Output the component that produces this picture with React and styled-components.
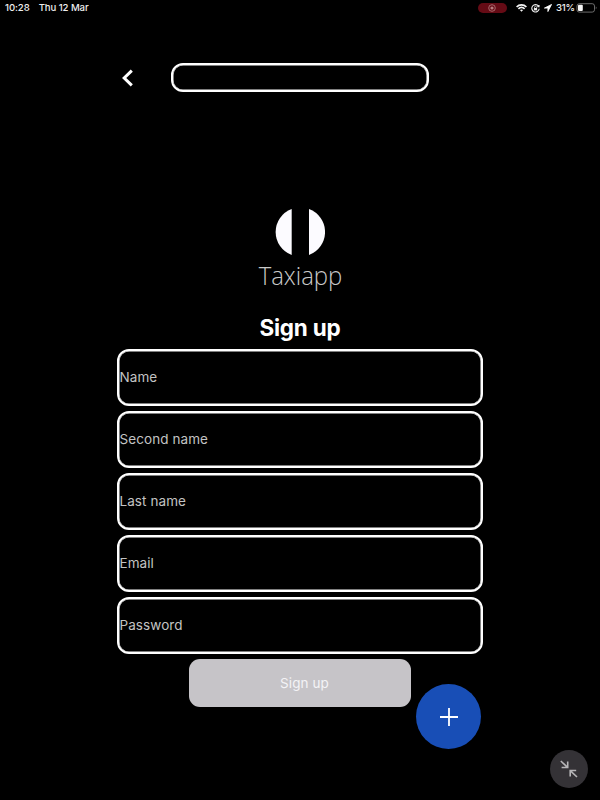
import React from "react";
import styled, { createGlobalStyle } from "styled-components";

const GlobalStyle = createGlobalStyle`
  *, *::before, *::after { box-sizing: border-box; }
  body { margin: 0; background: #000; font-family: Inter, "Liberation Sans", sans-serif; -webkit-font-smoothing: antialiased; }
  button, input { font-family: inherit; }
`;

const Screen = styled.div`
  position: relative;
  display: flex;
  flex-direction: column;
  width: 600px;
  height: 800px;
  background: #000;
  color: #fff;
  overflow: hidden;
`;

const StatusBar = styled.header`
  display: flex;
  align-items: center;
  justify-content: space-between;
  height: 16px;
  padding: 0 3px 0 5px;
  font-size: 9.6px;
  font-weight: 500;
  line-height: 16px;
  letter-spacing: -0.08px;
  color: #eee;
`;

const StatusGroup = styled.div`
  display: flex;
  align-items: center;
  gap: ${(p) => p.$gap}px;
  svg { display: block; }
`;

const RecordingPill = styled.span`
  display: flex;
  align-items: center;
  justify-content: center;
  width: 29px;
  height: 10px;
  margin-right: 5px;
  border-radius: 5px;
  background: #650b15;
`;

const BatteryLevel = styled.span`
  display: flex;
  align-items: center;
  gap: 1px;
  letter-spacing: -0.15px;
`;

const NavBar = styled.nav`
  display: flex;
  align-items: center;
  height: 29px;
  margin-top: 47px;
  padding-left: 117px;
`;

const BackButton = styled.button`
  display: flex;
  width: 54px;
  height: 29px;
  padding: 5px 0 0 4px;
  border: 0;
  background: none;
`;

const OutlinedInput = styled.input`
  border: 2px solid #fff;
  border-radius: 12px;
  background: #000;
  box-shadow: inset 0 0 0 0.5px #fff;
  color: #fff;
  outline: none;
`;

const NavField = styled(OutlinedInput)`
  width: 258px;
  height: 29px;
  padding: 0 8px;
`;

const Brand = styled.div`
  display: flex;
  flex-direction: column;
  align-items: center;
  margin-top: 115px;
  svg { display: block; }
`;

const BrandName = styled.span`
  height: 36px;
  font-family: "Open Sans", "Noto Sans", sans-serif;
  font-size: 26px;
  font-weight: 300;
  line-height: 36px;
  color: #c9c9c9;
  transform: scaleX(0.92);
`;

const Title = styled.h1`
  height: 30px;
  margin: 20px 0 0;
  font-size: 22.5px;
  font-weight: 700;
  line-height: 30px;
  letter-spacing: -0.2px;
  text-align: center;
`;

const Form = styled.form`
  display: flex;
  flex-direction: column;
  align-items: center;
  gap: 5px;
  margin-top: 6px;
`;

const Field = styled(OutlinedInput)`
  width: 366px;
  height: 57px;
  padding: 0 0 1px 0.5px;
  font-size: 13.5px;
  letter-spacing: 0.08px;
  &::placeholder { color: #c3c3c3; opacity: 1; }
`;

const SubmitButton = styled.button`
  width: 222px;
  height: 48px;
  padding: 0 0 0 9px;
  border: 0;
  border-radius: 11px;
  background: #c6c4c8;
  color: #f4f3f6;
  font-size: 13.5px;
  letter-spacing: 0.1px;
`;

const RoundButton = styled.button`
  position: absolute;
  left: ${(p) => p.$x}px;
  top: ${(p) => p.$y}px;
  display: flex;
  align-items: center;
  justify-content: center;
  width: ${(p) => p.$size}px;
  height: ${(p) => p.$size}px;
  padding: 0;
  border: 0;
  border-radius: 50%;
  background: ${(p) => p.$color};
`;

const fields = [
  { label: "Name", type: "text" },
  { label: "Second name", type: "text" },
  { label: "Last name", type: "text" },
  { label: "Email", type: "email" },
  { label: "Password", type: "password" },
];

const RecordIcon = () => (
  <svg width="8" height="8" viewBox="0 0 8 8" fill="none">
    <circle cx="4" cy="4" r="3.3" stroke="#b87d80" strokeWidth="0.8" />
    <circle cx="4" cy="4" r="1.6" fill="#b87d80" />
  </svg>
);

const WifiIcon = () => (
  <svg width="11" height="8" viewBox="0 0 11 8" fill="none" stroke="#f5f5f5" strokeWidth="1.7">
    <path d="M.6 3C3.3.2 7.7.2 10.4 3M2.4 4.9c1.8-1.7 4.4-1.7 6.2 0" />
    <path d="M5.5 7.8 3.9 6.1c1-.8 2.2-.8 3.2 0Z" fill="#f5f5f5" stroke="none" />
  </svg>
);

const RotationLockIcon = () => (
  <svg width="9" height="9" viewBox="0 0 9 9" fill="none" stroke="#eee">
    <path d="M7.5 2.1A3.7 3.7 0 1 0 8.2 4.8M8 1v1.8H6.2" strokeWidth="1.1" />
    <rect x="2.9" y="4" width="3.2" height="2.4" fill="#eee" stroke="none" />
    <path d="M3.5 4V3.3a1 1 0 0 1 2 0V4" strokeWidth="0.7" />
  </svg>
);

const LocationIcon = () => (
  <svg width="8" height="8" viewBox="0 0 8 8">
    <path d="M7.6.4.4 4.1h3.5v3.5Z" fill="#fff" stroke="#fff" strokeWidth="0.8" strokeLinejoin="round" />
  </svg>
);

const BatteryIcon = () => (
  <svg width="21" height="10" viewBox="0 0 21 10" fill="none">
    <rect x="1" y="0.7" width="17.5" height="8.4" rx="2.3" stroke="#858585" strokeWidth="0.8" />
    <rect x="2" y="1.7" width="4.8" height="6.4" rx="1" fill="#f5f5f5" />
    <path d="M19.8 3.6c.9.4.9 2.2 0 2.6Z" fill="#858585" />
  </svg>
);

const ChevronIcon = () => (
  <svg width="14" height="20" viewBox="0 0 14 20" fill="none" stroke="#fff" strokeWidth="3">
    <path d="M10.8 2.7 3.2 10l7.6 7.3" />
  </svg>
);

const LogoMark = () => (
  <svg width="50" height="50" viewBox="0 0 50 50" fill="#fcfbff">
    <path d="M16.7 2v46A24.5 24.5 0 0 1 16.7 2Z" />
    <path d="M34 2v46A24.5 24.5 0 0 0 34 2Z" />
  </svg>
);

const PlusIcon = () => (
  <svg width="18" height="18" viewBox="0 0 18 18" stroke="#fff" strokeWidth="1.8">
    <path d="M9 0v18M0 9h18" />
  </svg>
);

const ShrinkIcon = () => (
  <svg width="18" height="18" viewBox="0 0 18 18" fill="none" stroke="#b6b5b7" strokeWidth="1.6">
    <path d="m.8 1 6.5 6.1M7.7 1.6v5.9H1.6M17 17l-6.5-6.2M10.2 16.5v-6h6" />
  </svg>
);

export default function App() {
  return (
    <>
      <GlobalStyle />
      <Screen>
        <StatusBar>
          <StatusGroup $gap={9}>
            <span>10:28</span>
            <span>Thu 12 Mar</span>
          </StatusGroup>
          <StatusGroup $gap={4}>
            <RecordingPill><RecordIcon /></RecordingPill>
            <WifiIcon />
            <RotationLockIcon />
            <LocationIcon />
            <BatteryLevel>31%<BatteryIcon /></BatteryLevel>
          </StatusGroup>
        </StatusBar>
        <NavBar>
          <BackButton type="button" aria-label="Back"><ChevronIcon /></BackButton>
          <NavField aria-label="Search" />
        </NavBar>
        <Brand>
          <LogoMark />
          <BrandName>Taxiapp</BrandName>
        </Brand>
        <Title>Sign up</Title>
        <Form>
          {fields.map((field) => (
            <Field key={field.label} type={field.type} placeholder={field.label} />
          ))}
          <SubmitButton type="button">Sign up</SubmitButton>
        </Form>
        <RoundButton type="button" aria-label="Add" $x={416} $y={684} $size={65} $color="#184eb6">
          <PlusIcon />
        </RoundButton>
        <RoundButton type="button" aria-label="Shrink" $x={550} $y={750} $size={38} $color="#343236">
          <ShrinkIcon />
        </RoundButton>
      </Screen>
    </>
  );
}
